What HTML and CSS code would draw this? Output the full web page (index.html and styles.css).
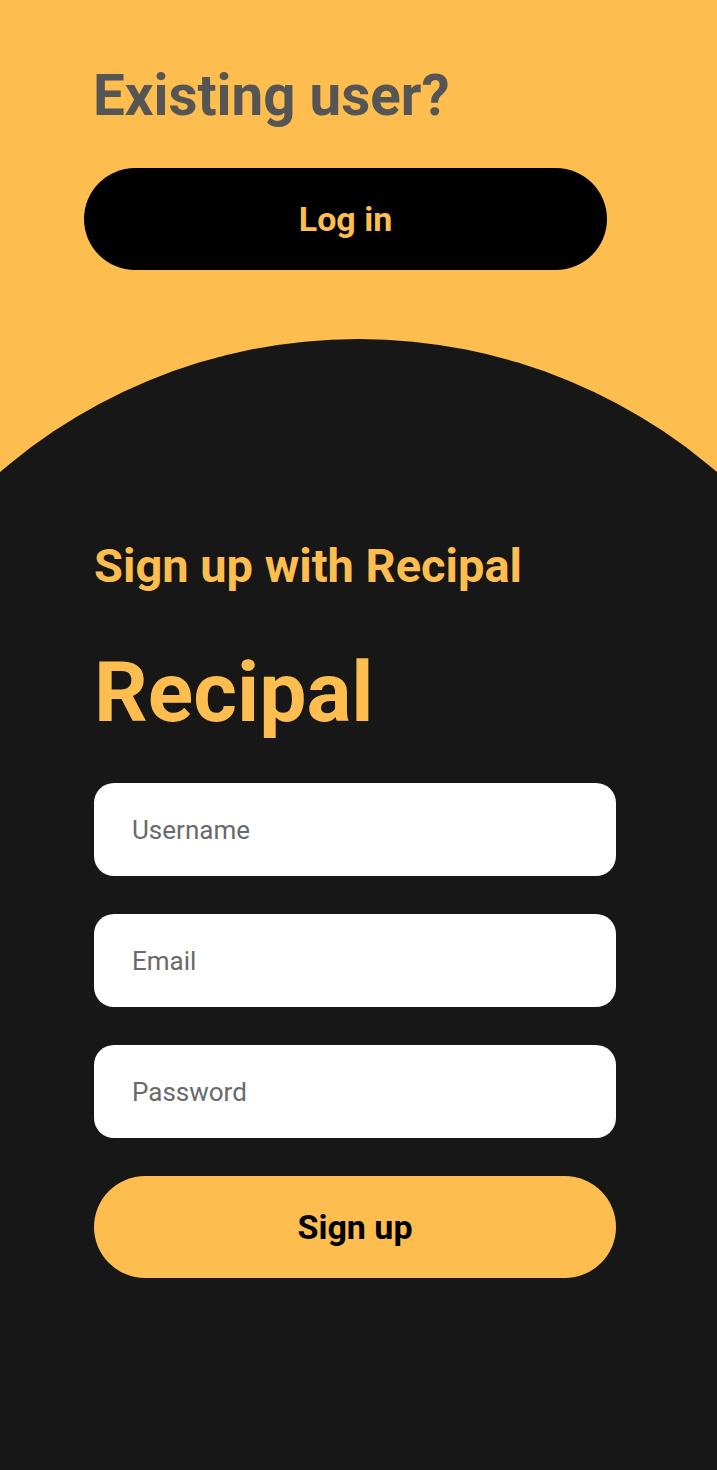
FILE: index.html
```html
<!DOCTYPE html>
<html lang="en">
<head>
<meta charset="utf-8">
<title>Recipal – Sign up</title>
<link rel="stylesheet" href="styles.css">
</head>
<body>
<div class="page">
  <section class="existing">
    <h1 class="existing-title">Existing user?</h1>
    <button class="btn btn-login" type="button">Log in</button>
  </section>
  <section class="signup">
    <h2 class="signup-title">Sign up with Recipal</h2>
    <div class="brand">Recipal</div>
    <form class="signup-form">
      <input class="field" type="text" placeholder="Username">
      <input class="field" type="email" placeholder="Email">
      <input class="field" type="password" placeholder="Password">
      <button class="btn btn-signup" type="button">Sign up</button>
    </form>
  </section>
</div>
</body>
</html>
```

FILE: styles.css
```css
* { box-sizing: border-box; }

html, body {
  margin: 0;
  padding: 0;
  background: #171717;
}

body {
  font-family: Roboto, "Noto Sans", "Liberation Sans", sans-serif;
}

.page {
  min-height: 100vh;
  display: flex;
  flex-direction: column;
  overflow: hidden;
  background: #febe4f;
}

.existing {
  padding: 62px 110px 69px 84px;
}

.existing-title {
  margin: 0;
  padding-left: 9px;
  font-size: 56.5px;
  line-height: 68px;
  font-weight: 700;
  color: #555555;
}

.btn {
  display: block;
  width: 100%;
  height: 102px;
  border: none;
  border-radius: 51px;
  font-family: inherit;
  font-size: 34px;
  font-weight: 700;
  cursor: pointer;
}

.btn-login {
  margin-top: 38px;
  background: #000000;
  color: #febe4f;
}

.signup {
  flex: 1;
  margin: 0 -190px;
  padding: 199px 291px 80px 284px;
  background: #171717;
  border-radius: 548px 548px 0 0;
}

.signup-title {
  margin: 0;
  font-size: 47px;
  line-height: 56px;
  font-weight: 700;
  color: #febe4f;
}

.brand {
  margin-top: 49px;
  font-size: 84px;
  line-height: 100px;
  font-weight: 700;
  color: #febe4f;
}

.signup-form {
  margin-top: 40px;
  display: flex;
  flex-direction: column;
  gap: 38px;
}

.field {
  display: block;
  width: 100%;
  height: 93px;
  padding: 0 38px;
  border: none;
  border-radius: 20px;
  background: #ffffff;
  font-family: inherit;
  font-size: 26px;
  color: #222;
  outline: none;
}

.field::placeholder {
  color: #6a6a6a;
}

.btn-signup {
  background: #febe4f;
  color: #000000;
}
```
